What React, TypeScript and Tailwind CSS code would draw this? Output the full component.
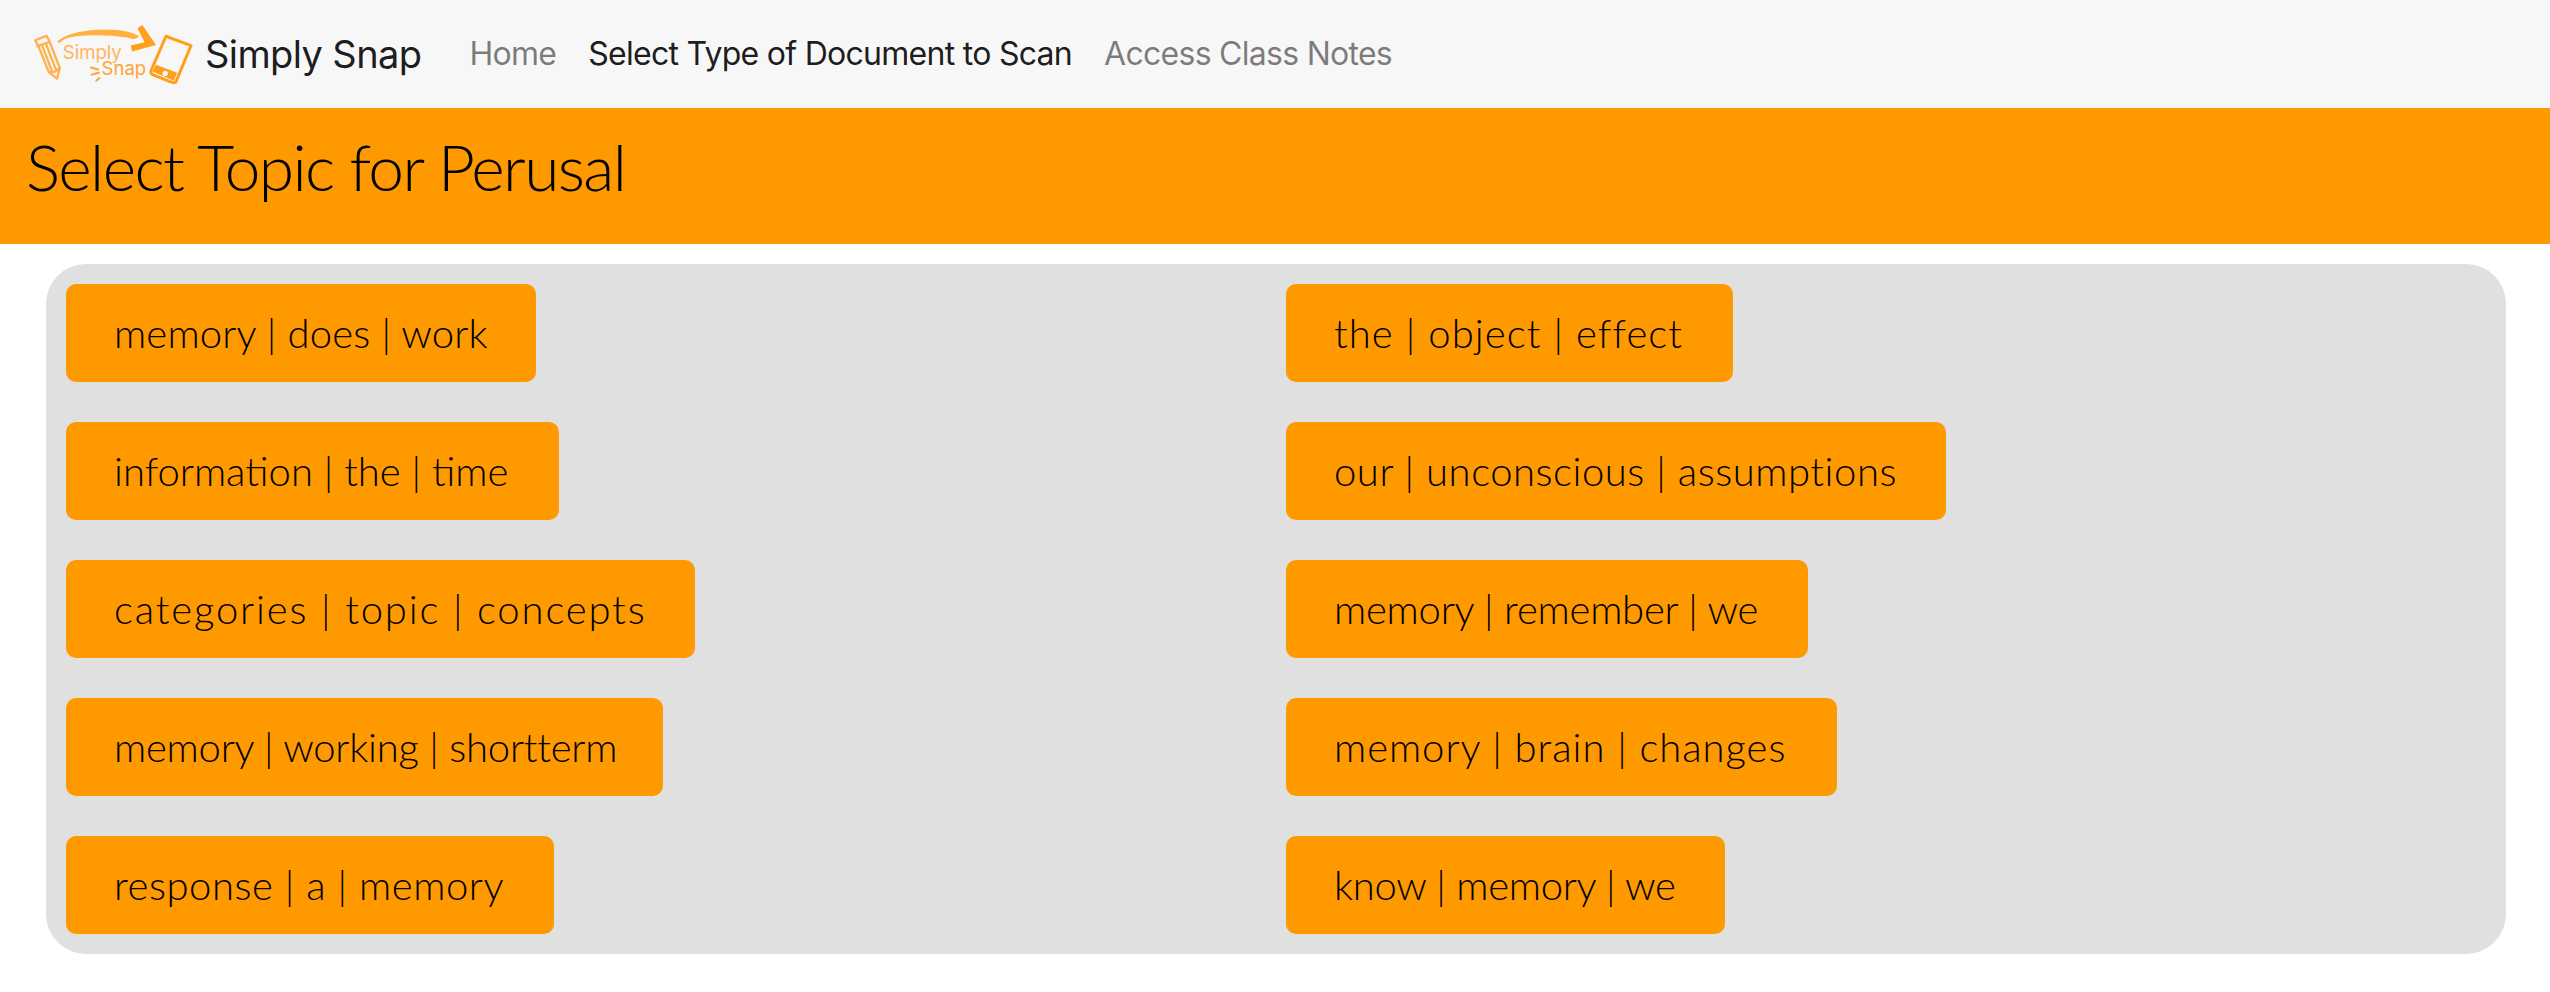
const navLinks = [
  { label: "Home", className: "text-black/50" },
  { label: "Select Type of Document to Scan", className: "text-black/90" },
  { label: "Access Class Notes", className: "text-black/50" },
];

const topics = [
  { label: "memory | does | work", className: "w-[470px] tracking-[0.16px]" },
  { label: "the | object | effect", className: "w-[447px] tracking-[1.08px]" },
  { label: "information | the | time", className: "w-[493px] tracking-normal" },
  { label: "our | unconscious | assumptions", className: "w-[660px] tracking-[0.54px]" },
  { label: "categories | topic | concepts", className: "w-[629px] tracking-[1.85px]" },
  { label: "memory | remember | we", className: "w-[522px] tracking-[-0.22px]" },
  { label: "memory | working | shortterm", className: "w-[597px] tracking-[-0.23px]" },
  { label: "memory | brain | changes", className: "w-[551px] tracking-[0.95px]" },
  { label: "response | a | memory", className: "w-[488px] tracking-[0.54px]" },
  { label: "know | memory | we", className: "w-[439px] tracking-[-0.27px]" },
];

function Logo() {
  return (
    <svg viewBox="90 30 490 190" className="h-[63px] w-[163px] shrink-0" fill="none">
      <g stroke="#ffb24f" strokeWidth="7" strokeLinejoin="round" strokeLinecap="round">
        <path d="M102 82 L136 69 Q142 78 146 88 L176 166 L168 198 L143 178 L110 96 Q104 90 102 82 Z" />
        <path d="M108 100 L146 87" />
        <path d="M122 96 L152 174" />
        <path d="M134 92 L164 170" />
        <path d="M143 178 Q160 182 175 166" />
      </g>
      <path d="M168 86 Q200 56 290 50 Q380 46 415 70 Q405 84 380 74 Q300 62 225 70 Q190 74 175 90 Z" fill="#ffb03f" />
      <path d="M425 36 L466 96 L394 116 L390 98 L432 88 L410 46 Z" fill="#ff9f1c" />
      <text x="185" y="138" fontFamily="Inter, sans-serif" fontSize="56" fill="#ffb45a">Simply</text>
      <text x="302" y="188" fontFamily="Inter, sans-serif" fontSize="56" fill="#ffa436">Snap</text>
      <g stroke="#ffa436" strokeWidth="6" strokeLinecap="round">
        <path d="M270 164 L292 170" />
        <path d="M272 186 L294 180" />
        <path d="M286 204 L296 196" />
      </g>
      <path d="M496 70 L572 98 L526 208 Q520 212 512 208 L456 186 Q448 180 452 172 Z" stroke="#ff9f1c" strokeWidth="9" strokeLinejoin="round" />
      <path d="M456 176 L520 204 L530 180 L466 156 Z" fill="#ff9f1c" />
      <circle cx="494" cy="182" r="8" fill="#f7f7f7" />
    </svg>
  );
}

export default function App() {
  return (
    <div className="min-h-[992px] bg-white font-['Inter',sans-serif]">
      <nav className="flex h-[108px] items-center bg-[#f7f7f7] pl-[31px]">
        <Logo />
        <a className="ml-[11px] text-[38px] leading-none tracking-[-0.6px] text-black/90">Simply Snap</a>
        <ul className="ml-[48px] flex gap-[32px] text-[32px] leading-none tracking-[-0.72px]">
          {navLinks.map((link) => (
            <li key={link.label} className={link.className}>
              {link.label}
            </li>
          ))}
        </ul>
      </nav>

      <header className="flex h-[136px] items-center bg-[#ff9900] pb-[18px] pl-[26px]">
        <h1 className="font-['Lato',sans-serif] text-[64px] font-light leading-none tracking-[-1.6px] text-black">
          Select Topic for Perusal
        </h1>
      </header>

      <main className="ml-[46px] mr-[44px] mt-5 rounded-[40px] bg-[#e0e0e0] p-5">
        <div className="grid grid-cols-[1220px_1fr] gap-y-10">
          {topics.map((topic) => (
            <button
              key={topic.label}
              className={`${topic.className} flex h-[98px] items-center whitespace-nowrap rounded-[10px] bg-[#ff9900] pl-[48px] font-['Lato',sans-serif] text-[40px] font-light text-black`}
            >
              {topic.label}
            </button>
          ))}
        </div>
      </main>
    </div>
  );
}
